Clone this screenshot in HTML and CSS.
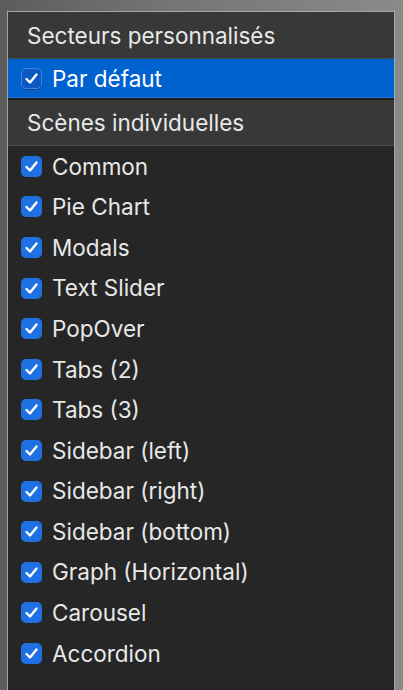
FILE: index.html
```html
<!DOCTYPE html>
<html lang="fr">
<head>
<meta charset="utf-8">
<link rel="stylesheet" href="styles.css">
</head>
<body>
<div class="panel">
  <div class="section-header first">Secteurs personnalisés</div>
  <div class="row selected">
    <span class="box box-sel"><svg viewBox="0 0 21 21"><path d="M5.5 11 L9 14.5 L15.5 6.5"/></svg></span>
    <span class="label">Par défaut</span>
  </div>
  <div class="section-header second">Scènes individuelles</div>
  <ul class="list">
    <li class="item"><span class="box"><svg viewBox="0 0 21 21"><path d="M5.5 11 L9 14.5 L15.5 6.5"/></svg></span><span class="label">Common</span></li>
    <li class="item"><span class="box"><svg viewBox="0 0 21 21"><path d="M5.5 11 L9 14.5 L15.5 6.5"/></svg></span><span class="label">Pie Chart</span></li>
    <li class="item"><span class="box"><svg viewBox="0 0 21 21"><path d="M5.5 11 L9 14.5 L15.5 6.5"/></svg></span><span class="label">Modals</span></li>
    <li class="item"><span class="box"><svg viewBox="0 0 21 21"><path d="M5.5 11 L9 14.5 L15.5 6.5"/></svg></span><span class="label">Text Slider</span></li>
    <li class="item"><span class="box"><svg viewBox="0 0 21 21"><path d="M5.5 11 L9 14.5 L15.5 6.5"/></svg></span><span class="label">PopOver</span></li>
    <li class="item"><span class="box"><svg viewBox="0 0 21 21"><path d="M5.5 11 L9 14.5 L15.5 6.5"/></svg></span><span class="label">Tabs (2)</span></li>
    <li class="item"><span class="box"><svg viewBox="0 0 21 21"><path d="M5.5 11 L9 14.5 L15.5 6.5"/></svg></span><span class="label">Tabs (3)</span></li>
    <li class="item"><span class="box"><svg viewBox="0 0 21 21"><path d="M5.5 11 L9 14.5 L15.5 6.5"/></svg></span><span class="label">Sidebar (left)</span></li>
    <li class="item"><span class="box"><svg viewBox="0 0 21 21"><path d="M5.5 11 L9 14.5 L15.5 6.5"/></svg></span><span class="label">Sidebar (right)</span></li>
    <li class="item"><span class="box"><svg viewBox="0 0 21 21"><path d="M5.5 11 L9 14.5 L15.5 6.5"/></svg></span><span class="label">Sidebar (bottom)</span></li>
    <li class="item"><span class="box"><svg viewBox="0 0 21 21"><path d="M5.5 11 L9 14.5 L15.5 6.5"/></svg></span><span class="label">Graph (Horizontal)</span></li>
    <li class="item"><span class="box"><svg viewBox="0 0 21 21"><path d="M5.5 11 L9 14.5 L15.5 6.5"/></svg></span><span class="label">Carousel</span></li>
    <li class="item"><span class="box"><svg viewBox="0 0 21 21"><path d="M5.5 11 L9 14.5 L15.5 6.5"/></svg></span><span class="label">Accordion</span></li>
  </ul>
</div>
</body>
</html>
```
FILE: styles.css
```css
html, body {
  margin: 0;
  padding: 0;
  height: 100%;
  overflow: hidden;
}
body {
  background: linear-gradient(90deg, #5c5c5c 0%, #747474 40%, #8a8a8a 100%);
  font-family: Inter, "Noto Sans", sans-serif;
}
.panel {
  margin: 11px 0 0 7px;
  width: 386px;
  height: 700px;
  border: 1px solid #a6a6a6;
  border-bottom: none;
  background: #262626;
  box-shadow: inset -1px 0 0 #1c1c1c;
  display: flex;
  flex-direction: column;
}
.section-header {
  background: #383838;
  color: #e8e8e8;
  font-size: 22.5px;
  display: flex;
  align-items: center;
  padding-left: 19px;
  border-bottom: 1px solid #4b4b4b;
}
.section-header.first {
  height: 46px;
}
.section-header.second {
  height: 45px;
}
.row {
  display: flex;
  align-items: center;
  padding-left: 13px;
  gap: 10px;
  color: #fff;
  font-size: 22.5px;
}
.row.selected {
  height: 39px;
  background: #0062cf;
  border-bottom: 2px solid #1b1b1b;
  box-shadow: inset 0 -1px 0 #2a7be0;
}
.list {
  list-style: none;
  margin: 0;
  padding: 0;
}
.item {
  height: 40.6px;
  display: flex;
  align-items: center;
  padding-left: 13px;
  gap: 10px;
  color: #e8e8e8;
  font-size: 22.5px;
}
.box {
  width: 21px;
  height: 21px;
  border-radius: 5px;
  background: #1f70e2;
  box-sizing: border-box;
  display: flex;
  flex: none;
}
.box svg {
  width: 21px;
  height: 21px;
}
.box path {
  fill: none;
  stroke: #fff;
  stroke-width: 2.4;
  stroke-linecap: round;
  stroke-linejoin: round;
}
.box-sel {
  background: #0a58c2;
  border: 1px solid #3c86e6;
  box-shadow: 0 1px 1px rgba(0,0,0,0.25);
}
.box-sel svg {
  margin: -1px;
}
.label {
  line-height: 1;
  padding-top: 1px;
}
```
